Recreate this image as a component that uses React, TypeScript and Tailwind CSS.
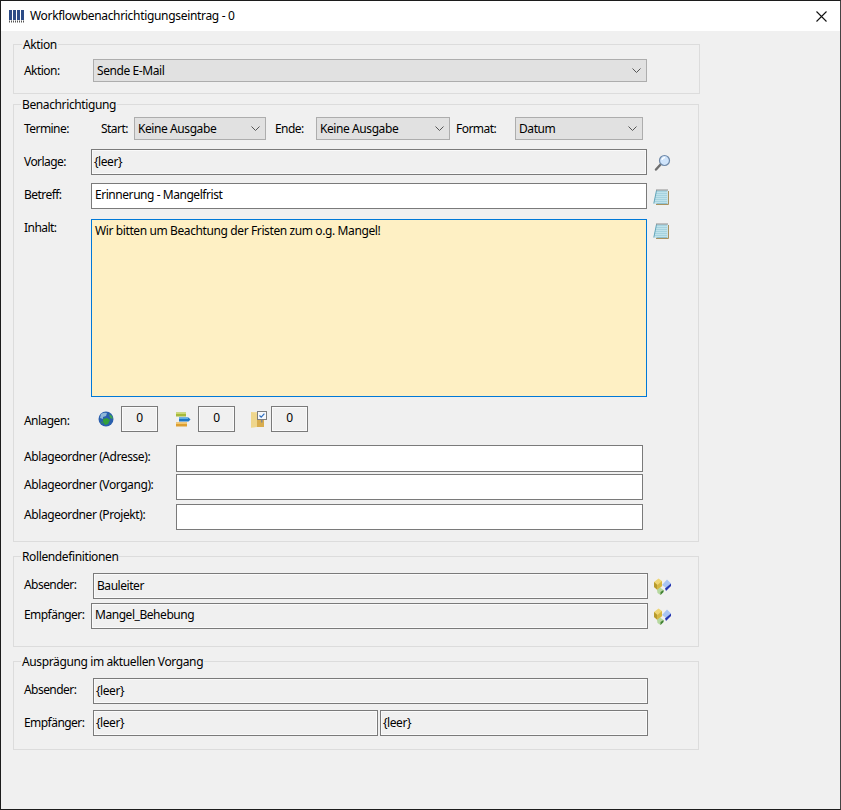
import React from "react";

const Chevron = () => (
  <svg width="9" height="5" viewBox="0 0 9 5" className="shrink-0">
    <path d="M0.5 0.5 L4.5 4.5 L8.5 0.5" fill="none" stroke="#555" strokeWidth="1" />
  </svg>
);

const Select = ({ text, w }: { text: string; w: string }) => (
  <div className={`${w} h-[23px] shrink-0 flex items-center justify-between pl-[3px] pr-[5px] bg-[#e1e1e1] border border-[#adadad] tracking-[-0.42px]`}>
    <span>{text}</span>
    <Chevron />
  </div>
);

const Field = ({ text, w, white, h = "h-[26px]", pl = "pl-[3px]", pb = "" }: { text?: string; w: string; white?: boolean; h?: string; pl?: string; pb?: string }) => (
  <div className={`${w} ${h} ${pl} ${pb} shrink-0 flex items-center border border-[#7a7a7a] tracking-[-0.45px] ${white ? "bg-white" : "bg-[#f0f0f0] shadow-[inset_0_0_0_1px_#fafafa]"}`}>
    {text}
  </div>
);

const Label = ({ text, w, pb = "", track = "tracking-[-0.55px]" }: { text: string; w: string; pb?: string; track?: string }) => (
  <div className={`${w} ${pb} ${track} shrink-0`}>{text}</div>
);

const Legend = ({ text, ml = "ml-[8px]" }: { text: string; ml?: string }) => (
  <div className={`-mt-[8px] ${ml} h-[16px] leading-[16px] w-fit px-[1px] bg-[#f0f0f0] tracking-[-0.38px]`}>{text}</div>
);

const Notepad = () => (
  <svg width="17" height="17" viewBox="0 0 17 17" className="shrink-0">
    <path d="M15.5 2 V15.5 H3" fill="none" stroke="#a8925f" strokeWidth="1" />
    <path d="M3.5 1.5 H14.5 V14.5 H0.8 Z" fill="#a5d3df" />
    <path d="M3 3.5 H14.5 M2.6 5.5 H14.5 M2.2 7.5 H14.5 M1.8 9.5 H14.5 M1.4 11.5 H14.5 M1 13.5 H14.5" stroke="#c6e6ed" strokeWidth="0.8" />
    <path d="M3.5 1.5 L0.8 14.5" stroke="#63a5b9" strokeWidth="1" />
    <path d="M3.5 14.5 H14.5" stroke="#8fc0cf" strokeWidth="1" />
    <path d="M3.5 1 H15" stroke="#333" strokeWidth="1" strokeDasharray="1 1" />
  </svg>
);

const Magnifier = () => (
  <svg width="17" height="17" viewBox="0 0 17 17" className="shrink-0">
    <path d="M7 10 L2 15.5" stroke="#6e6e6e" strokeWidth="2.4" strokeLinecap="round" />
    <circle cx="10.5" cy="6.5" r="5" fill="#cfe4fb" stroke="#6f89a8" strokeWidth="1.2" />
    <path d="M8 6 A3 3 0 0 1 11 3.6" fill="none" stroke="#fff" strokeWidth="1.2" />
  </svg>
);

const Gems = () => (
  <svg width="17" height="17" viewBox="0 0 17 17" className="shrink-0">
    <path d="M8 7 L13 1.5 L17 5.5 L12 10 Z" fill="#a9c4f2" />
    <path d="M17 5.5 L17 8 L12 13 L11 10.5 Z" fill="#2435b0" />
    <path d="M0 4 L4.5 0.5 L8 3 L8 8 L3.5 12 L0 9 Z" fill="#efd675" />
    <path d="M0 4 L3.5 7 L3.5 12 L0 9 Z" fill="#b79a2c" />
    <path d="M3.5 7 L8 3 L8 8 L3.5 12 Z" fill="#d6b63f" />
    <path d="M3 12 L6 9.5 L9.5 12 L9.5 14 L6.5 17 L3.5 15 Z" fill="#b6d8a0" />
    <path d="M6.5 14 L9.5 12 L9.5 14 L6.5 17 Z" fill="#3f7f32" />
  </svg>
);

const Globe = () => (
  <svg width="16" height="16" viewBox="0 0 16 16" className="shrink-0">
    <circle cx="8" cy="8" r="7.5" fill="#2a5fae" />
    <path d="M3 3 Q6 1 9 2 L8 5 L5 6 L5 8 L2 7 Z" fill="#8fb8d8" />
    <path d="M5 8 L9 7 L12 9 L10 13 L7 14 L5 11 Z" fill="#34a03a" />
    <path d="M11 3 L14 5 L15 8 L12 7 Z" fill="#3fa350" />
    <path d="M3 10 L5 12 L4 13 Z" fill="#34a03a" />
  </svg>
);

const Bars = () => (
  <svg width="15" height="15" viewBox="0 0 15 15" className="shrink-0">
    <rect x="0" y="0.5" width="10" height="4" fill="#a6b93a" />
    <rect x="0" y="0.5" width="10" height="1.5" fill="#cdd873" />
    <path d="M3 5.5 H12.5 L14.5 7.5 L12.5 9.5 H3 Z" fill="#1f78c4" />
    <rect x="3" y="5.5" width="9" height="1.5" fill="#5fb0e6" />
    <rect x="0" y="10.5" width="11" height="4" fill="#dda032" />
    <rect x="0" y="10.5" width="11" height="1.5" fill="#f2c873" />
  </svg>
);

const FolderIcon = () => (
  <svg width="16" height="17" viewBox="0 0 16 17" className="shrink-0">
    <path d="M0 1 H6 V16 L0 17 Z" fill="#f3dd9d" />
    <path d="M0 1 L6 3 V16 H0 Z" fill="#efd68c" />
    <rect x="6" y="3" width="7" height="13" fill="#d9ad4e" />
    <rect x="6.5" y="0.5" width="9" height="8" fill="#f6f8fb" stroke="#7d7d7d" />
    <path d="M8.5 4.5 L10.2 6.2 L13.4 2.6" fill="none" stroke="#2f6fc0" strokeWidth="1.2" />
    <rect x="10" y="8.5" width="1.5" height="3" fill="#888" />
  </svg>
);

const AppIcon = () => (
  <svg width="16" height="13" viewBox="0 0 16 13" className="shrink-0">
    <rect x="0" y="0" width="3" height="10" fill="#2c4b86" />
    <rect x="4" y="0" width="3" height="10" fill="#2c4b86" />
    <rect x="8" y="0" width="3" height="10" fill="#2c4b86" />
    <rect x="12" y="0" width="3" height="10" fill="#2c4b86" />
    <path d="M0 11.5 H3 M4 11.5 H7 M8 11.5 H11 M12 11.5 H15" stroke="#555" strokeWidth="2" strokeDasharray="1 1" />
  </svg>
);

const Counter = () => (
  <div className="w-[37px] h-[26px] shrink-0 flex items-center justify-center border border-[#7a7a7a] bg-[#f0f0f0] shadow-[inset_0_0_0_1px_#fafafa] pb-[2px]">0</div>
);

export default function App() {
  return (
    <div className="w-[841px] h-[810px] flex flex-col bg-[#f0f0f0] border border-[#1c1c1c] border-r-[#444] text-[12px] tracking-[-0.35px] text-black overflow-hidden [font-family:'Noto_Sans',sans-serif]">
      <div className="h-[30px] shrink-0 bg-white flex items-center pl-[8px] pr-[13px]">
        <AppIcon />
        <span className="ml-[5px] flex-1 tracking-[-0.32px]">Workflowbenachrichtigungseintrag - 0</span>
        <svg width="11" height="11" viewBox="0 0 11 11">
          <path d="M0.5 0.5 L10.5 10.5 M10.5 0.5 L0.5 10.5" stroke="#111" strokeWidth="1.1" />
        </svg>
      </div>

      {/* Aktion */}
      <div className="ml-[12px] mt-[13px] w-[687px] h-[50px] shrink-0 border border-[#dcdcdc] pl-[10px]">
        <Legend text="Aktion" ml="-ml-[2px]" />
        <div className="mt-[6px] flex items-center">
          <Label text="Aktion:" w="w-[69px]" />
          <Select text="Sende E-Mail" w="w-[554px]" />
        </div>
      </div>

      {/* Benachrichtigung */}
      <div className="ml-[12px] mt-[10px] w-[686px] h-[438px] shrink-0 border border-[#dcdcdc] pl-[10px]">
        <Legend text="Benachrichtigung" ml="-ml-[3px]" />
        <div className="mt-[4px] flex items-center">
          <Label text="Termine:" w="w-[77px]" />
          <Label text="Start:" w="w-[33px]" />
          <Select text="Keine Ausgabe" w="w-[132px]" />
          <div className="ml-[9px]"><Label text="Ende:" w="w-[41px]" /></div>
          <Select text="Keine Ausgabe" w="w-[134px]" />
          <div className="ml-[6px]"><Label text="Format:" w="w-[59px]" /></div>
          <Select text="Datum" w="w-[128px]" />
        </div>
        <div className="mt-[9px] flex items-center">
          <Label text="Vorlage:" w="w-[67px]" />
          <Field text="{leer}" w="w-[556px]" pl="pl-[2px]" />
          <div className="ml-[7px]"><Magnifier /></div>
        </div>
        <div className="mt-[8px] flex items-center">
          <Label text="Betreff:" w="w-[67px]" pb="pb-[2px]" />
          <Field text="Erinnerung - Mangelfrist" w="w-[556px]" white pb="pb-[2px]" />
          <div className="ml-[6px] mt-[2px]"><Notepad /></div>
        </div>
        <div className="mt-[10px] flex items-start">
          <Label text="Inhalt:" w="w-[67px]" />
          <div className="w-[556px] h-[178px] shrink-0 border border-[#0078d7] bg-[#fef0c4] pl-[3px] pt-[2px] tracking-[-0.39px]">
            Wir bitten um Beachtung der Fristen zum o.g. Mangel!
          </div>
          <div className="ml-[6px] mt-[4px]"><Notepad /></div>
        </div>
        <div className="mt-[9px] flex items-center">
          <div className="w-[74px] mt-[3px] shrink-0 tracking-[-0.55px]">Anlagen:</div>
          <Globe />
          <div className="ml-[7px]"><Counter /></div>
          <div className="ml-[18px]"><Bars /></div>
          <div className="ml-[7px]"><Counter /></div>
          <div className="ml-[16px]"><FolderIcon /></div>
          <div className="ml-[4px]"><Counter /></div>
        </div>
        <div className="mt-[13px] flex items-center">
          <Label text="Ablageordner (Adresse):" w="w-[152px]" pb="pb-[4px]" track="tracking-[-0.42px]" />
          <Field w="w-[467px]" white h="h-[27px]" />
        </div>
        <div className="mt-[2px] flex items-center">
          <Label text="Ablageordner (Vorgang):" w="w-[152px]" pb="pb-[4px]" track="tracking-[-0.42px]" />
          <Field w="w-[467px]" white />
        </div>
        <div className="mt-[4px] flex items-center">
          <Label text="Ablageordner (Projekt):" w="w-[152px]" pb="pb-[4px]" track="tracking-[-0.42px]" />
          <Field w="w-[467px]" white />
        </div>
      </div>

      {/* Rollendefinitionen */}
      <div className="ml-[12px] mt-[14px] w-[686px] h-[91px] shrink-0 border border-[#dcdcdc] pl-[10px]">
        <Legend text="Rollendefinitionen" ml="-ml-[3px]" />
        <div className="mt-[8px] flex items-center">
          <Label text="Absender:" w="w-[69px]" pb="pb-[2px]" />
          <Field text="Bauleiter" w="w-[555px]" />
          <div className="ml-[6px]"><Gems /></div>
        </div>
        <div className="mt-[4px] flex items-center">
          <Label text="Empfänger:" w="w-[67px]" pb="pb-[2px]" />
          <Field text="Mangel_Behebung" w="w-[557px]" pb="pb-[2px]" />
          <div className="ml-[6px]"><Gems /></div>
        </div>
      </div>

      {/* Ausprägung */}
      <div className="ml-[12px] mt-[14px] w-[686px] h-[89px] shrink-0 border border-[#dcdcdc] pl-[10px]">
        <Legend text="Ausprägung im aktuellen Vorgang" ml="-ml-[3px]" />
        <div className="mt-[8px] flex items-center">
          <Label text="Absender:" w="w-[69px]" pb="pb-[2px]" />
          <Field text="{leer}" w="w-[555px]" pl="pl-[2px]" />
        </div>
        <div className="mt-[6px] flex items-center">
          <Label text="Empfänger:" w="w-[69px]" />
          <Field text="{leer}" w="w-[285px]" pl="pl-[2px]" />
          <div className="ml-[2px]"><Field text="{leer}" w="w-[268px]" pl="pl-[2px]" /></div>
        </div>
      </div>
    </div>
  );
}
